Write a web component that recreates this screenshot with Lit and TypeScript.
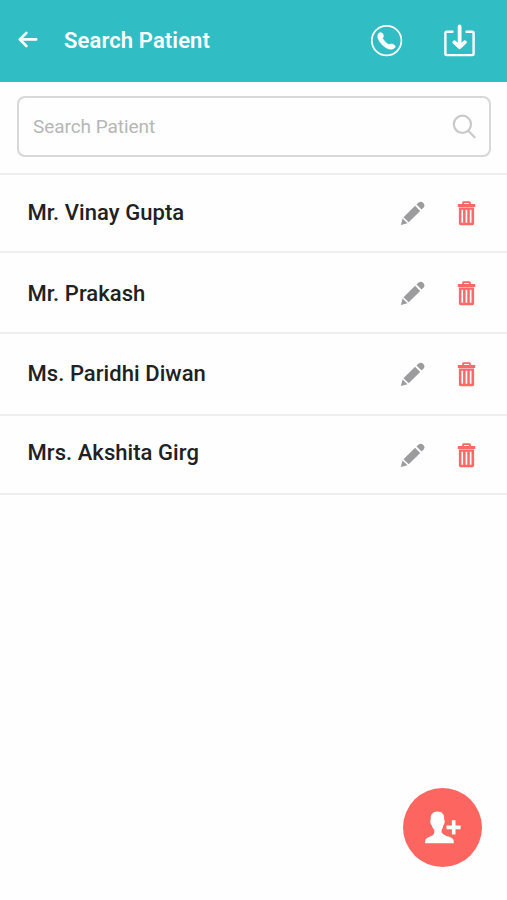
import { LitElement, html, css } from "lit";
import { customElement, property } from "lit/decorators.js";

@customElement("patient-row")
class PatientRow extends LitElement {
  @property() name = "";
  static styles = css`
    :host { display: flex; align-items: center; box-sizing: border-box; padding: 0 31px 0 27.5px; border-bottom: 2px solid #eeeeef; }
    :host(:nth-child(2)) { padding-top: 2px; }
    :host(:nth-child(4)) .name { padding-bottom: 5px; }
    :host(:nth-child(4)) { padding-top: 1px; }
    .name { flex: 1; font-size: 22px; line-height: 26px; font-weight: 500; letter-spacing: 0.06px; color: #202122; white-space: nowrap; }
    svg { display: block; flex: none; }
    .edit { margin-right: 32px; }
  `;
  render() {
    return html`
      <span class="name">${this.name}</span>
      <svg class="edit" width="25" height="25" viewBox="0 0 25 25" fill="#9c9c9e">
        <path d="M.8 24 2.6 17.5 7.5 22.2Z" />
        <path d="M3.5 16.2 15.1 4.8 20.2 9.9 8.7 21.3Z" />
        <path d="M16.5 3.5 18.6 1.5Q21-.3 23.3 1.9 25.4 4.2 23.6 6.4L21.5 8.5Z" />
      </svg>
      <svg width="19" height="25" viewBox="0 0 19 25" fill="#fa6964">
        <path fill-rule="evenodd" d="M5.2 1.6Q5.2.2 6.6.2H12.4Q13.8.2 13.8 1.6V3H18.2V5.9H.8V3H5.2ZM7 1.9V3H12V1.9Z" />
        <path fill-rule="evenodd" d="M1.9 6.4H17.1V22.6Q17.1 24.3 15.4 24.3H3.6Q1.9 24.3 1.9 22.6ZM4.4 8.8V21.8H6.1V8.8ZM8.6 8.8V21.8H10.3V8.8ZM12.8 8.8V21.8H14.5V8.8Z" />
      </svg>`;
  }
}

@customElement("app-root")
class AppRoot extends LitElement {
  static styles = css`
    :host { display: block; position: relative; box-sizing: border-box; height: 900px; background: #fefefe; font-family: Roboto, "Noto Sans", sans-serif; overflow: hidden; }
    svg { display: block; flex: none; }
    header { height: 82px; box-sizing: border-box; display: flex; align-items: center; padding: 0 31.5px 1px 18px; background: #30bdc4; color: #fff; }
    .back { margin: 0 26px 3px 0; }
    h1 { flex: 1; margin: 0; padding-top: 1px; font-size: 22px; line-height: 26px; font-weight: 600; letter-spacing: 0.11px; }
    .call { margin-right: 40px; }
    .search { padding: 14px 16px 16px 17px; border-bottom: 2px solid #eeeeef; }
    .field { height: 61px; box-sizing: border-box; display: flex; align-items: center; justify-content: space-between; padding: 0 13px 0 14px; border: 2px solid #d8d8d8; border-radius: 8px; }
    .placeholder { font-size: 19px; line-height: 24px; letter-spacing: -0.06px; color: #b6b6b6; }
    .list { display: grid; grid-template-rows: 78px 81px 82px 79px; }
    .add { position: absolute; left: 403px; top: 788px; width: 79px; height: 79px; padding: 0; border: 0; border-radius: 50%; background: #fd6660; }
  `;
  names = ["Mr. Vinay Gupta", "Mr. Prakash", "Ms. Paridhi Diwan", "Mrs. Akshita Girg"];
  render() {
    return html`
      <header>
        <svg class="back" width="20" height="17" viewBox="0 0 20 17" fill="none" stroke="#fff" stroke-width="2.6" stroke-linecap="round" stroke-linejoin="round">
          <path d="M8.4 1.8 1.8 8.4 8.4 15M2.2 8.4H18.2" />
        </svg>
        <h1>Search Patient</h1>
        <svg class="call" width="32" height="32" viewBox="0 0 32 32">
          <circle cx="15.6" cy="15.6" r="14.8" fill="none" stroke="#fff" stroke-width="1.7" />
          <path fill="#fff" stroke="#fff" stroke-width=".5" d="M7.6 8.4Q9.6 6.4 11.6 8.5 12.9 10.3 12.3 11.9L11.6 13.5Q13.8 17.2 17.4 19.6L19.6 19Q21.2 18.6 23 19.7 25.4 21.2 23.5 23 21.1 25 17.8 24C12.8 22.2 8.8 18.1 7 13.3Q6.2 10.4 7.6 8.4Z" />
        </svg>
        <svg width="33" height="33" viewBox="0 0 33 33" fill="none" stroke="#fff" stroke-linecap="round" stroke-linejoin="round">
          <path stroke-width="2.4" d="M9.5 7.8H3.7Q2.4 7.8 2.4 9.1V29.8Q2.4 31.1 3.7 31.1H29.3Q30.6 31.1 30.6 29.8V9.1Q30.6 7.8 29.3 7.8H23.5" />
          <path stroke-width="3.8" d="M16.6 2.5V22M11.3 18.2 16.6 23.2 21.9 18.2" />
        </svg>
      </header>
      <div class="search">
        <div class="field">
          <span class="placeholder">Search Patient</span>
          <svg width="24" height="25" viewBox="0 0 24 25" fill="none" stroke="#c9c9c9" stroke-width="2.2" stroke-linecap="round">
            <circle cx="10.4" cy="10.3" r="8.6" /><path d="M16.6 17 22.6 23.2" />
          </svg>
        </div>
      </div>
      <div class="list">${this.names.map((n) => html`<patient-row .name=${n}></patient-row>`)}</div>
      <button class="add" aria-label="Add patient">
        <svg width="79" height="79" viewBox="0 0 79 79" fill="#fff">
          <path d="M34.5 23.4C39.3 23.4 41.6 26.4 41.2 31.8Q42.2 32.6 41.6 34.8 41.2 36.8 40.2 37.4 39.8 40.4 38.6 42.1V44.6Q39.6 46.6 43.5 47.9 49.6 49.6 50.4 51.6 50.9 53 50.8 55.3H22Q21.9 53 22.5 51.6 23.4 49.6 29 47.7 30.8 46.8 31.3 44.6V42.1Q29.6 40.3 28.8 37.4 27.8 36.8 27.4 34.8 26.8 32.6 27.8 31.8C27.2 26.4 29.7 23.4 34.5 23.4Z" />
          <path d="M48.9 32.2H52.5V37.5H57.6V41.3H52.5V46.6H48.9V41.3H43.5V37.5H48.9Z" />
        </svg>
      </button>`;
  }
}
